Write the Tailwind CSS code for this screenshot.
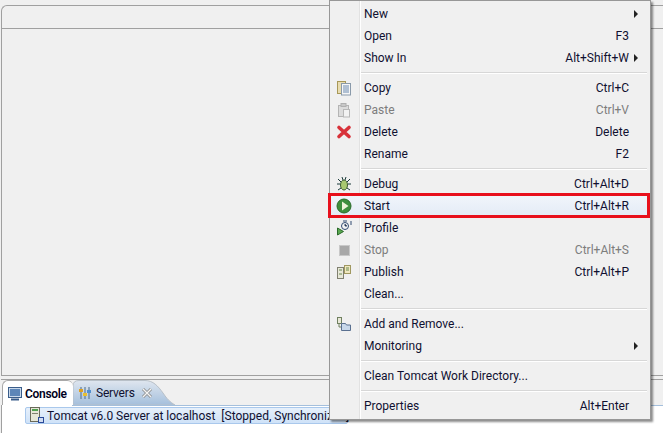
<!DOCTYPE html>
<html>
<head>
<meta charset="utf-8">
<script src="https://cdn.jsdelivr.net/npm/@tailwindcss/browser@4"></script>
</head>
<body class="m-0 overflow-hidden">
<div class="relative w-[663px] h-[433px] overflow-hidden bg-[#f0f0f0] text-[12px] leading-[22px] text-[#101030] font-['Roboto','Noto_Sans',sans-serif]">
  <!-- Editor area -->
  <div class="flex flex-col h-[380px] pt-[5px] pl-px">
    <div class="h-[371px] rounded-tl-[6px] border-t border-l border-[#a0a0a0] flex flex-col">
      <div class="h-[23px] border-b border-[#a0a0a0]"></div>
      <div class="flex-1"></div>
    </div>
    <div class="h-[5px] border-t border-b border-[#a0a0a0]"></div>
  </div>
  <!-- Tabs -->
  <div class="relative h-[25px] flex items-stretch">
    <div class="w-[71px] ml-[2px] h-[25px] rounded-t-[6px] border-t border-l border-[#a8a8a8] bg-white flex items-center gap-[2px] pl-[4px] pt-px font-semibold text-[#000020]">
      <svg width="16" height="16" viewBox="0 0 16 16"><rect x="1.5" y="1.5" width="13" height="10" fill="#c9d8ea" stroke="#3a5d8a"/><rect x="3" y="3" width="10" height="7" fill="#5d86b8"/><path d="M4 13.5h8" stroke="#3a5d8a" stroke-width="2"/></svg>
      <span class="tracking-[-0.3px]">Console</span>
    </div>
    <div class="relative w-[106px] h-[25px]">
      <svg class="absolute left-0 top-0" width="106" height="25" viewBox="0 0 106 25"><defs><linearGradient id="t" x1="0" y1="0" x2="0" y2="1"><stop offset="0" stop-color="#dfe6ef"/><stop offset="1" stop-color="#a4bfdc"/></linearGradient></defs><path d="M0 25V6Q0 0.5 6 0.5H72C80 0.5 85 6 90 13C94 19 97 22 102 25Z" fill="url(#t)" stroke="#b8c0c8"/></svg>
      <div class="relative flex items-center h-[25px] pt-px pl-[5px] gap-[3px]">
        <svg width="14" height="16" viewBox="0 0 14 16"><path d="M3 2v12M7 2v12M11 2v12" stroke="#4a6a8a"/><rect x="1" y="4" width="4" height="3" fill="#e0a020"/><rect x="5" y="8" width="4" height="3" fill="#e8c030"/><rect x="9" y="5" width="4" height="3" fill="#5090d0"/></svg>
        <span class="ml-[1px] tracking-[-0.2px]">Servers</span>
        <svg class="ml-[3px]" width="12" height="12" viewBox="0 0 12 12"><path d="M2 2l8 8M10 2l-8 8" stroke="#8a8a8a" stroke-width="3"/><path d="M2 2l8 8M10 2l-8 8" stroke="#f4f4f4" stroke-width="1.4"/></svg>
      </div>
    </div>
  </div>
  <!-- Server list -->
  <div class="absolute left-[1px] right-0 top-[405px] bottom-0 bg-white border-l border-[#a0a0a0]">
    <div class="absolute left-[70px] right-0 top-0 h-px bg-[#a4bfdc]"></div>
    <div class="ml-[23px] mt-[2px] w-[323px] h-[17px] rounded-[2px] border border-[#a9c8ec] bg-gradient-to-b from-[#e6f0fb] to-[#cfe2f8] flex items-center pl-[3px] whitespace-pre">
      <svg class="shrink-0" width="16" height="17" viewBox="0 0 16 17"><rect x="1.5" y="0.5" width="9" height="14" fill="#e6e6d8" stroke="#6a6a5a"/><rect x="3" y="2" width="6" height="2" fill="#50a050"/><rect x="3" y="6" width="6" height="1" fill="#808070"/><rect x="9.5" y="10.5" width="5" height="5" fill="#d0dcf0" stroke="#2a4a9a"/></svg>
      <span class="ml-[2px]">Tomcat v6.0 Server at localhost  [Stopped, Synchronized]</span>
    </div>
  </div>
  <!-- Context menu -->
  <div class="absolute left-[329px] top-0 w-[322px] h-[420px] bg-[#f0f0f0] border border-[#979797] shadow-[2px_2px_2px_rgba(0,0,0,0.45)] pt-[2px] pb-[2px] pl-px">
    <div class="absolute left-[29px] top-0 bottom-0 w-px bg-[#e2e2e2]"></div>
    <div class="absolute left-[30px] top-0 bottom-0 w-px bg-white"></div>
    <div class="flex items-center h-[22px] pl-[33px] pr-[11px]"><span>New</span><svg class="ml-auto" width="5" height="8" viewBox="0 0 5 8"><path d="M0 0l4 4-4 4z" fill="#222"/></svg></div>
    <div class="flex items-center h-[22px] pl-[33px] pr-[21px]"><span>Open</span><span class="ml-auto">F3</span></div>
    <div class="flex items-center h-[22px] pl-[33px] pr-[11px]"><span>Show In</span><span class="ml-auto">Alt+Shift+W</span><svg class="ml-[5px]" width="5" height="8" viewBox="0 0 5 8"><path d="M0 0l4 4-4 4z" fill="#222"/></svg></div>
    <div class="h-[8px] pl-[30px] pr-[3px] flex flex-col justify-center"><div class="h-px bg-[#d7d7d7]"></div><div class="h-px bg-white"></div></div>

    <div class="relative flex items-center h-[22px] pl-[33px] pr-[21px]"><svg class="absolute left-[5px]" width="16" height="16" viewBox="0 0 16 16"><rect x="1.5" y="1.5" width="8" height="12" fill="#e8dcb0" stroke="#a89858"/><rect x="5.5" y="3.5" width="9" height="11.5" fill="#f6f6f6" stroke="#8a9aaa"/><path d="M7 6h6M7 8h6M7 10h6M7 12h6" stroke="#6a8ab0"/></svg><span>Copy</span><span class="ml-auto">Ctrl+C</span></div>
    <div class="relative flex items-center h-[22px] pl-[33px] pr-[21px] text-[#7d7d7d]"><svg class="absolute left-[5px]" width="16" height="16" viewBox="0 0 16 16"><rect x="2.5" y="3.5" width="10" height="11" fill="#dcdcdc" stroke="#b4b4b4"/><rect x="5" y="1.5" width="5" height="3" fill="#c8c8c8" stroke="#b0b0b0"/><rect x="7.5" y="7.5" width="6" height="7.5" fill="#f2f2f2" stroke="#b8b8b8"/></svg><span>Paste</span><span class="ml-auto">Ctrl+V</span></div>
    <div class="relative flex items-center h-[22px] pl-[33px] pr-[21px]"><svg class="absolute left-[5px]" width="16" height="16" viewBox="0 0 16 16"><path d="M3 3.5l10 9M13 3.5l-10 9" stroke="#d8323a" stroke-width="3.6" stroke-linecap="round"/></svg><span>Delete</span><span class="ml-auto">Delete</span></div>
    <div class="flex items-center h-[22px] pl-[33px] pr-[21px]"><span>Rename</span><span class="ml-auto">F2</span></div>
    <div class="h-[8px] pl-[30px] pr-[3px] flex flex-col justify-center"><div class="h-px bg-[#d7d7d7]"></div><div class="h-px bg-white"></div></div>

    <div class="relative flex items-center h-[22px] pl-[33px] pr-[21px]"><svg class="absolute left-[5px]" width="16" height="16" viewBox="0 0 16 16"><path d="M2 3l3 3M14 3l-3 3M1 8h3M12 8h3M2 14l3-2M14 14l-3-2M6 1l1 3M10 1l-1 3" stroke="#1a3a3a"/><ellipse cx="8" cy="9" rx="3.5" ry="5" fill="#a8c870" stroke="#3a5a30"/></svg><span>Debug</span><span class="ml-auto">Ctrl+Alt+D</span></div>
    <div class="relative flex items-center h-[22px] pl-[33px] pr-[21px] bg-gradient-to-b from-[#f1f5fb] to-[#e3ebf6]"><svg class="absolute left-[5px]" width="16" height="16" viewBox="0 0 16 16"><circle cx="8" cy="8" r="7" fill="#3f8f3c" stroke="#2a6a2a"/><path d="M6 3.5l6.5 4.5-6.5 4.5z" fill="#f0f4d8"/></svg><span>Start</span><span class="ml-auto">Ctrl+Alt+R</span></div>
    <div class="relative flex items-center h-[22px] pl-[33px] pr-[21px]"><svg class="absolute left-[5px]" width="16" height="16" viewBox="0 0 16 16"><path d="M1.5 8l6 3.5-6 3.5z" fill="#5aa850" stroke="#2a6a2a"/><circle cx="9" cy="6" r="3.5" fill="#f4f4f4" stroke="#304a70"/><path d="M9 4v2h2M7 1h4M14 2h2M14 4h2" stroke="#304a70"/></svg><span>Profile</span></div>
    <div class="relative flex items-center h-[22px] pl-[33px] pr-[21px] text-[#7d7d7d]"><svg class="absolute left-[7px]" width="13" height="13" viewBox="0 0 13 13"><rect x="1.5" y="1.5" width="10" height="10" fill="#a8a8a8" stroke="#c8c8c8"/></svg><span>Stop</span><span class="ml-auto">Ctrl+Alt+S</span></div>
    <div class="relative flex items-center h-[22px] pl-[33px] pr-[21px]"><svg class="absolute left-[5px]" width="16" height="16" viewBox="0 0 16 16"><rect x="1.5" y="3.5" width="6" height="11" fill="#e8e8d8" stroke="#808070"/><rect x="8.5" y="1.5" width="6" height="8" fill="#f0e8c0" stroke="#a09860"/><path d="M3 6h3M3 10h3M10 4h3M10 6h3" stroke="#6a8a50"/></svg><span>Publish</span><span class="ml-auto">Ctrl+Alt+P</span></div>
    <div class="flex items-center h-[22px] pl-[33px] pr-[21px]"><span>Clean...</span></div>
    <div class="h-[8px] pl-[30px] pr-[3px] flex flex-col justify-center"><div class="h-px bg-[#d7d7d7]"></div><div class="h-px bg-white"></div></div>

    <div class="relative flex items-center h-[22px] pl-[33px] pr-[21px]"><svg class="absolute left-[5px]" width="16" height="16" viewBox="0 0 16 16"><rect x="1.5" y="1.5" width="4" height="6" fill="#e8e8d8" stroke="#708060"/><path d="M3 8v3h2" stroke="#708060" fill="none"/><path d="M5.5 7.5h4l1 1.5h4v5.5h-9z" fill="#c8d8ea" stroke="#5a7090"/></svg><span>Add and Remove...</span></div>
    <div class="flex items-center h-[22px] pl-[33px] pr-[11px]"><span>Monitoring</span><svg class="ml-auto" width="5" height="8" viewBox="0 0 5 8"><path d="M0 0l4 4-4 4z" fill="#222"/></svg></div>
    <div class="h-[8px] pl-[30px] pr-[3px] flex flex-col justify-center"><div class="h-px bg-[#d7d7d7]"></div><div class="h-px bg-white"></div></div>

    <div class="flex items-center h-[22px] pl-[33px] pr-[21px]"><span>Clean Tomcat Work Directory...</span></div>
    <div class="h-[8px] pl-[30px] pr-[3px] flex flex-col justify-center"><div class="h-px bg-[#d7d7d7]"></div><div class="h-px bg-white"></div></div>

    <div class="flex items-center h-[22px] pl-[33px] pr-[21px]"><span>Properties</span><span class="ml-auto">Alt+Enter</span></div>
  </div>
  <!-- Highlight -->
  <div class="absolute left-[328px] top-[193px] w-[322px] h-[25px] border-[3px] border-[#e8101c]"></div>
</div>
</body>
</html>
